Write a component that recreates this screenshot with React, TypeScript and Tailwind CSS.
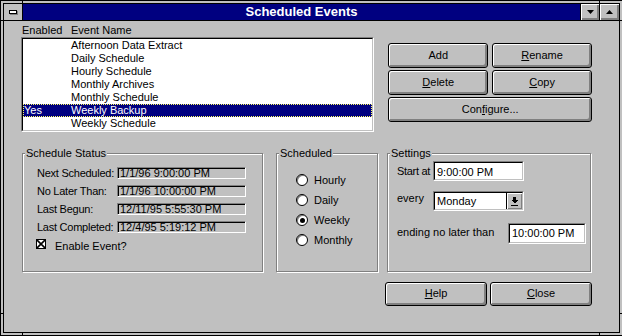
import React from 'react';

// Windows 3.1 style "Scheduled Events" dialog

const rows = [
  { enabled: '', name: 'Afternoon Data Extract' },
  { enabled: '', name: 'Daily Schedule' },
  { enabled: '', name: 'Hourly Schedule' },
  { enabled: '', name: 'Monthly Archives' },
  { enabled: '', name: 'Monthly Schedule' },
  { enabled: 'Yes', name: 'Weekly Backup', selected: true },
  { enabled: '', name: 'Weekly Schedule' },
];

const status = [
  { label: 'Next Scheduled:', value: '1/1/96 9:00:00 PM' },
  { label: 'No Later Than:', value: '1/1/96 10:00:00 PM' },
  { label: 'Last Begun:', value: '12/11/95 5:55:30 PM' },
  { label: 'Last Completed:', value: '12/4/95 5:19:12 PM' },
];

const Sunken: React.FC<{ className?: string; inner?: string; children?: React.ReactNode }> = ({
  className = '',
  inner = '',
  children,
}) => (
  <div className={`border border-t-[#808080] border-l-[#808080] border-b-white border-r-white ${className}`}>
    <div className={`h-full border border-t-black border-l-black border-b-[#c0c0c0] border-r-[#c0c0c0] ${inner}`}>
      {children}
    </div>
  </div>
);

const Button: React.FC<{ className?: string; children: React.ReactNode }> = ({ className = '', children }) => (
  <div
    className={`flex items-center justify-center pb-[1px] border border-black rounded-[3px] bg-[#c0c0c0] shadow-[inset_1px_1px_0_#fff,inset_-2px_-2px_0_#808080] leading-[13px] ${className}`}
  >
    {children}
  </div>
);

const Group: React.FC<{ label: string; className?: string; children?: React.ReactNode }> = ({
  label,
  className = '',
  children,
}) => (
  <div className={`relative border border-[#808080] shadow-[1px_1px_0_#fff,inset_1px_1px_0_#fff] ${className}`}>
    <span className="absolute left-[2px] top-[-7px] bg-[#c0c0c0] px-[1px] leading-[13px] whitespace-nowrap">{label}</span>
    {children}
  </div>
);

const Radio: React.FC<{ label: string; checked?: boolean }> = ({ label, checked }) => (
  <div className="flex items-center h-[12px] mb-[8px]">
    <div className="w-[12px] h-[12px] rounded-full border border-black bg-white shadow-[inset_1px_1px_0_#808080] flex items-center justify-center">
      {checked && <div className="w-[5px] h-[5px] rounded-full bg-black" />}
    </div>
    <span className="ml-[6px] leading-[12px]">{label}</span>
  </div>
);

export default function App() {
  return (
    <div className="w-[622px] h-[336px] overflow-hidden bg-[#c0c0c0] text-black text-[11px] font-['Liberation_Sans',Arial,sans-serif]">
      <div className="relative w-[623px] h-[336px] border border-black p-[2px]">
        {/* frame corner ticks */}
        <div className="absolute left-[21px] top-0 w-[1px] h-[2px] bg-black" />
        <div className="absolute left-[598px] top-0 w-[1px] h-[2px] bg-black" />
        <div className="absolute left-[21px] bottom-0 w-[1px] h-[2px] bg-black" />
        <div className="absolute left-[598px] bottom-0 w-[1px] h-[2px] bg-black" />
        <div className="absolute left-0 top-[19px] w-[2px] h-[1px] bg-black" />
        <div className="absolute left-0 top-[312px] w-[2px] h-[1px] bg-black" />
        <div className="absolute right-0 top-[19px] w-[2px] h-[1px] bg-black" />
        <div className="absolute right-0 top-[312px] w-[2px] h-[1px] bg-black" />

        <div className="h-full border border-black flex flex-col">
          {/* title bar */}
          <div className="flex h-[17px] border-b border-black">
            <div className="w-[19px] border-r border-black flex items-center justify-center">
              <div className="w-[8px] h-[4px] border border-black bg-white shadow-[1px_1px_0_#808080]" />
            </div>
            <div className="flex-1 bg-[#000080] text-white font-bold text-[13px] leading-[16px] text-center">
              Scheduled Events
            </div>
            <div className="w-[19px] border-l border-black bg-[#c0c0c0] shadow-[inset_1px_1px_0_#fff,inset_-2px_-2px_0_#808080] flex items-center justify-center">
              <svg width="7" height="4" viewBox="0 0 7 4">
                <polygon points="0,0 7,0 3.5,4" fill="#000" />
              </svg>
            </div>
            <div className="w-[20px] border-l border-black bg-[#c0c0c0] shadow-[inset_1px_1px_0_#fff,inset_-2px_-2px_0_#808080] flex items-center justify-center">
              <svg width="7" height="4" viewBox="0 0 7 4">
                <polygon points="0,4 7,4 3.5,0" fill="#000" />
              </svg>
            </div>
          </div>

          {/* body */}
          <div className="flex-1 flex flex-col pl-[17px] pt-[3px] pr-[27px]">
            <div className="flex items-start">
              <div className="w-[354px]">
                <div className="flex h-[13px] leading-[13px] pl-[1px]">
                  <span className="w-[49px]">Enabled</span>
                  <span>Event Name</span>
                </div>
                <Sunken className="h-[95px]" inner="bg-white">
                  {rows.map((r) => (
                    <div
                      key={r.name}
                      className={`flex h-[13px] leading-[11px] border ${
                        r.selected ? 'bg-[#000080] text-white border-dotted border-[#ffff60]' : 'border-transparent'
                      }`}
                    >
                      <span className="w-[47px]">{r.enabled}</span>
                      <span>{r.name}</span>
                    </div>
                  ))}
                </Sunken>
              </div>
              <div className="ml-[14px] mt-[19px] w-[204px] grid grid-cols-2 gap-x-[4px] gap-y-[2px]">
                <Button className="h-[25px]">Add</Button>
                <Button className="h-[25px]">
                  <span>
                    <u>R</u>ename
                  </span>
                </Button>
                <Button className="h-[25px]">
                  <span>
                    <u>D</u>elete
                  </span>
                </Button>
                <Button className="h-[25px]">
                  <span>
                    <u>C</u>opy
                  </span>
                </Button>
                <Button className="h-[25px] col-span-2">
                  <span>
                    Con<u>f</u>igure...
                  </span>
                </Button>
              </div>
            </div>

            {/* group boxes */}
            <div className="flex mt-[21px]">
              <Group label="Schedule Status" className="ml-[1px] w-[241px] h-[119px]">
                <div className="pl-[14px] pt-[13px]">
                  {status.map((s) => (
                    <div key={s.label} className="flex h-[12px] mb-[6px]">
                      <span className="w-[80px] leading-[12px] whitespace-nowrap tracking-[-0.25px]">{s.label}</span>
                      <div className="w-[129px] h-[12px] border-t border-l border-t-[#808080] border-l-[#808080] border-b border-r border-b-white border-r-white shadow-[inset_1px_1px_0_#000] pl-[2px] leading-[10px] whitespace-nowrap overflow-hidden">
                        {s.value}
                      </div>
                    </div>
                  ))}
                  <div className="flex items-start mt-[4px] ml-[-1px]">
                    <div className="w-[10px] h-[10px] border border-black bg-white">
                      <svg width="8" height="8" viewBox="0 0 8 8" className="block">
                        <path d="M0 0L8 8M8 0L0 8" stroke="#000" strokeWidth="1.6" />
                      </svg>
                    </div>
                    <span className="ml-[9px] mt-[2px] leading-[10px] whitespace-nowrap">Enable Event?</span>
                  </div>
                </div>
              </Group>

              <Group label="Scheduled" className="ml-[13px] w-[102px] h-[119px]">
                <div className="pl-[19px] pt-[20px]">
                  <Radio label="Hourly" />
                  <Radio label="Daily" />
                  <Radio label="Weekly" checked />
                  <Radio label="Monthly" />
                </div>
              </Group>

              <Group label="Settings" className="ml-[9px] w-[204px] h-[119px]">
                <div className="pl-[9px] pt-[7px]">
                  <div className="flex items-start">
                    <span className="w-[36px] pt-[4px] leading-[13px] whitespace-nowrap tracking-[-0.3px]">Start at</span>
                    <Sunken className="w-[91px] h-[20px]" inner="bg-white">
                      <div className="pl-[2px] pt-[3px] leading-[13px]">9:00:00 PM</div>
                    </Sunken>
                  </div>
                  <div className="flex items-start mt-[10px]">
                    <span className="w-[36px] pt-[1px] leading-[13px]">every</span>
                    <Sunken className="w-[91px] h-[20px]" inner="bg-white flex">
                      <div className="flex-1 pl-[2px] pt-[2px] leading-[13px]">Monday</div>
                      <div className="w-[16px] border-l border-black bg-[#c0c0c0] shadow-[inset_1px_1px_0_#fff,inset_-1px_-1px_0_#808080] flex items-center justify-center">
                        <svg width="7" height="9" viewBox="0 0 7 9" shapeRendering="crispEdges">
                          <rect x="2" y="0" width="3" height="3" fill="#000" />
                          <polygon points="0,3 7,3 3.5,6.5" fill="#000" />
                          <rect x="0" y="7.5" width="7" height="1.5" fill="#000" />
                        </svg>
                      </div>
                    </Sunken>
                  </div>
                  <div className="flex items-start mt-[12px]">
                    <span className="w-[111px] pt-[3px] leading-[13px] whitespace-nowrap">ending no later than</span>
                    <Sunken className="w-[78px] h-[21px]" inner="bg-white">
                      <div className="pl-[2px] pt-[2px] leading-[13px]">10:00:00 PM</div>
                    </Sunken>
                  </div>
                </div>
              </Group>
            </div>

            {/* bottom buttons */}
            <div className="flex justify-end gap-[3px] mt-[10px]">
              <Button className="w-[102px] h-[24px]">
                <span>
                  <u>H</u>elp
                </span>
              </Button>
              <Button className="w-[102px] h-[24px]">
                <span>
                  <u>C</u>lose
                </span>
              </Button>
            </div>
          </div>
        </div>
      </div>
    </div>
  );
}
